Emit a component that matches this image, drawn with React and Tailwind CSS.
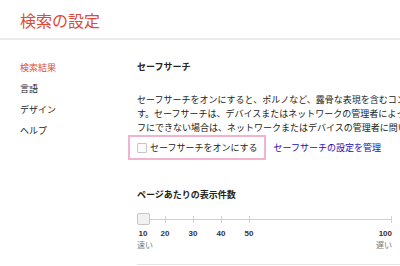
import React from "react";

const ja = { fontFamily: '"Noto Sans CJK JP", "Liberation Sans", sans-serif' };
const num = { fontFamily: '"Liberation Sans", sans-serif' };

const navItems = [
  { label: "検索結果", active: true },
  { label: "言語" },
  { label: "デザイン" },
  { label: "ヘルプ" },
];

// tick positions on the slider track, in px from its left end
const ticks = [
  { value: "10", x: 6 },
  { value: "20", x: 28 },
  { value: "30", x: 56 },
  { value: "40", x: 84 },
  { value: "50", x: 112 },
];

const App = () => {
  return (
    <div className="w-[400px] h-[266px] overflow-hidden bg-white text-[#222]" style={ja}>
      {/* Header */}
      <div className="h-10 flex items-center pl-5 pt-[2px] border-b-2 border-[#ebebeb]">
        <h1 className="text-[16px] text-[#dd4b39] leading-none">検索の設定</h1>
      </div>

      <div className="flex">
        {/* Left nav */}
        <div className="w-[137px] shrink-0 pl-5 pt-[17px] flex flex-col">
          {navItems.map((item, index) => (
            <div
              key={index}
              className={`text-[9px] leading-[21px] ${item.active ? "text-[#dd4b39]" : "text-[#222]"}`}
            >
              {item.label}
            </div>
          ))}
        </div>

        {/* Main */}
        <div className="flex-1 min-w-0 pt-[20px]">
          <h2 className="text-[9px] font-bold leading-[14px]">セーフサーチ</h2>

          <div className="mt-[19px] text-[9px] leading-[14px] whitespace-nowrap overflow-hidden">
            <p>セーフサーチをオンにすると、ポルノなど、露骨な表現を含むコンテンツを検索結果から除外できま</p>
            <p>す。セーフサーチは、デバイスまたはネットワークの管理者によってロックされている場合があります。</p>
            <p>フにできない場合は、ネットワークまたはデバイスの管理者に問い合わせてください。</p>
          </div>

          <div className="flex items-center">
            <div className="-ml-[9px] h-[25px] flex items-center gap-[3px] pl-[7px] pr-[6px] border-2 border-[#f3b3d0]">
              <span className="w-[10px] h-[10px] border border-[#c6c6c6] rounded-[1px] bg-[#fafafa]" />
              <span className="text-[9px] text-[#222]">セーフサーチをオンにする</span>
            </div>
            <span className="ml-[8px] text-[9px] text-[#1a0dab]">セーフサーチの設定を管理</span>
          </div>

          <h2 className="mt-[28px] text-[9px] font-bold leading-[14px]">ページあたりの表示件数</h2>

          {/* Slider */}
          <div className="relative mt-[10px] w-[255px] h-[52px]">
            <div className="absolute left-0 right-0 top-[7px] h-px bg-[#d0d0d0]" />
            {ticks.slice(1).map((t) => (
              <div key={t.value} className="absolute top-[4px] w-px h-[7px] bg-[#d0d0d0]" style={{ left: t.x }} />
            ))}
            <div className="absolute right-0 top-[4px] w-px h-[7px] bg-[#d0d0d0]" />
            <div className="absolute left-0 top-[1px] w-[13px] h-[12px] border border-[#c6c6c6] rounded-[2px] bg-[#f1f1f1]" />
            {ticks.map((t) => (
              <span
                key={t.value}
                className="absolute top-[18px] text-[8px] font-bold text-[#333] leading-none -translate-x-1/2"
                style={{ left: t.x, ...num }}
              >
                {t.value}
              </span>
            ))}
            <span className="absolute right-0 top-[18px] text-[8px] font-bold text-[#333] leading-none" style={num}>
              100
            </span>
            <span className="absolute left-0 top-[29px] text-[8px] text-[#777] leading-none">速い</span>
            <span className="absolute right-0 top-[29px] text-[8px] text-[#777] leading-none">遅い</span>
          </div>

          <div className="h-px bg-[#e5e5e5]" />
        </div>
      </div>
    </div>
  );
};

export default App;
